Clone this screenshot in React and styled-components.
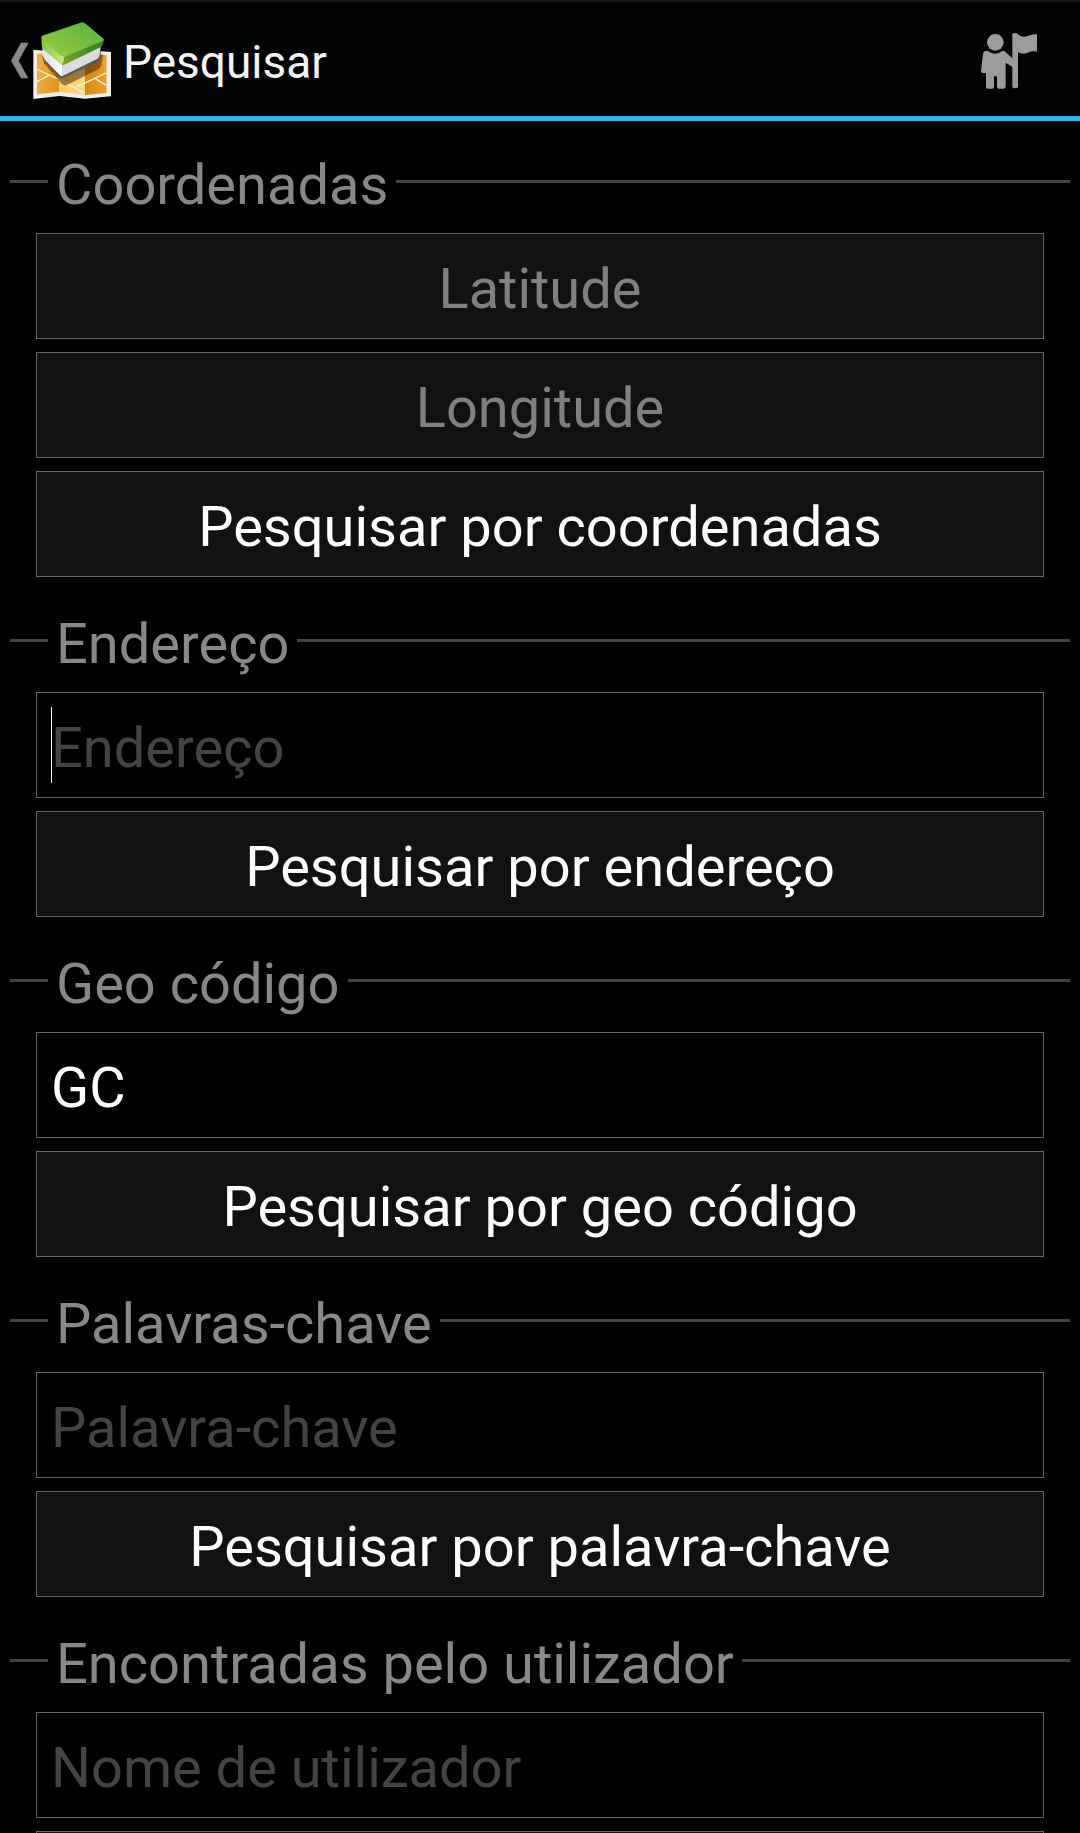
import React from "react";
import styled, { createGlobalStyle } from "styled-components";

const GlobalStyle = createGlobalStyle`
  * { box-sizing: border-box; }
  body {
    margin: 0;
    background: #000;
    color: #fff;
    font-family: Roboto, "Liberation Sans", sans-serif;
  }
`;

const Screen = styled.div`
  display: flex;
  flex-direction: column;
  height: 100vh;
  overflow: hidden;
`;

const ActionBar = styled.header`
  display: flex;
  flex: none;
  align-items: center;
  justify-content: space-between;
  padding: 18px 42px 15px 10px;
  background: #020303;
  border-top: 2px solid #1a1a1a;
  border-bottom: 5px solid #33b5e5;
`;

const IconButton = styled.button`
  display: flex;
  align-items: center;
  gap: 2px;
  padding: 0;
  border: 0;
  background: none;
`;

const Brand = styled.div`
  display: flex;
  align-items: center;
  gap: 10px;
`;

const Title = styled.h1`
  margin: 0;
  padding-top: 2px;
  color: #f3f3f3;
  font-size: 46px;
  font-weight: 400;
  line-height: 54px;
`;

const Content = styled.main`
  display: flex;
  flex: 1;
  flex-direction: column;
  gap: 27px;
  min-height: 0;
  padding: 24px 10px 0;
  overflow-y: auto;
  scrollbar-width: none;
`;

const Section = styled.section`
  display: flex;
  flex: none;
  flex-direction: column;
  gap: 15px;
`;

const Heading = styled.h2`
  display: flex;
  align-items: center;
  gap: 8px;
  margin: 0;
  color: #888;
  font-size: 56px;
  font-weight: 400;
  line-height: 66px;

  &::before,
  &::after {
    content: "";
    height: 3px;
    background: #444;
  }
  &::before { width: 38px; }
  &::after { flex: 1; }
`;

const HeadingText = styled.span`
  padding-top: 7px;
`;

const Controls = styled.div`
  display: flex;
  flex-direction: column;
  gap: 13px;
  padding: 0 26px;
`;

const Button = styled.button`
  height: 106px;
  padding: 6px 14px 0;
  border: 1px solid #666;
  border-radius: 0;
  background: #111;
  color: ${(p) => (p.$hint ? "#808080" : "#fff")};
  font: inherit;
  font-size: 56px;
  line-height: 66px;
  text-align: center;
`;

const Input = styled.input`
  width: 100%;
  height: 106px;
  padding: 6px 14px 0;
  border: 1px solid #666;
  border-radius: 0;
  outline: 0;
  background: ${(p) =>
    p.$caret ? "linear-gradient(#fff, #fff) 14px 14px / 1px 76px no-repeat #000" : "#000"};
  color: #fff;
  font: inherit;
  font-size: 56px;

  &::placeholder {
    color: #444;
    opacity: 1;
  }
`;

const Chevron = () => (
  <svg width="20" height="38" viewBox="30 126 60 114" aria-hidden="true">
    <path d="M63 128H86L56 182L85 235H63L33 182Z" fill="#8a8a8a" />
  </svg>
);

const Logo = () => (
  <svg width="81" height="81" viewBox="96 60 243 243" aria-hidden="true">
    <defs>
      <linearGradient id="mapLeft" x1="0" x2="1">
        <stop offset="0" stopColor="#f0b44c" />
        <stop offset="1" stopColor="#dd911f" />
      </linearGradient>
      <linearGradient id="mapMid" x1="0" x2="1">
        <stop offset="0" stopColor="#ffc95c" />
        <stop offset="1" stopColor="#ffd98a" />
      </linearGradient>
      <linearGradient id="mapRight" x1="0" x2="1">
        <stop offset="0" stopColor="#d8860f" />
        <stop offset="1" stopColor="#eba63a" />
      </linearGradient>
      <linearGradient id="lidTop" x1="0" y1="1" x2="1" y2="0">
        <stop offset="0" stopColor="#9ccd3c" />
        <stop offset="1" stopColor="#55b043" />
      </linearGradient>
      <linearGradient id="lidSide" x1="0" x2="1">
        <stop offset="0" stopColor="#74a82c" />
        <stop offset="1" stopColor="#2f7a2b" />
      </linearGradient>
      <linearGradient id="lidFront" x1="0" x2="1">
        <stop offset="0" stopColor="#84c43a" />
        <stop offset="1" stopColor="#c3e27a" />
      </linearGradient>
      <linearGradient id="boxFront" x1="0" x2="1">
        <stop offset="0" stopColor="#dedede" />
        <stop offset="1" stopColor="#ffffff" />
      </linearGradient>
      <clipPath id="mapArea">
        <path d="M111 160L178 166L255 160L320 165V279L255 285L178 275L111 283Z" />
      </clipPath>
    </defs>
    <path d="M100 149L178 156L255 150L333 156V289L255 296L178 288L100 297Z" fill="#f1eeea" />
    <g clipPath="url(#mapArea)">
      <path d="M100 140H178V300H100Z" fill="url(#mapLeft)" />
      <path d="M178 140H255V300H178Z" fill="url(#mapMid)" />
      <path d="M255 140H333V300H255Z" fill="url(#mapRight)" />
      <path
        d="M104 204L150 226L178 238L255 281M108 246L150 224M232 260L324 216M284 235L326 260"
        fill="none"
        stroke="#fbf0dc"
        strokeWidth="4"
      />
      <path d="M128 168L132 190L184 250Q192 259 202 254L298 206Q304 200 305 192L309 160Z" fill="#4c2c00" fillOpacity="0.56" />
    </g>
    <path d="M127 168Q128 178 133 184L178 231Q184 236 192 233L293 185Q299 181 300 174L303 154Z" fill="#55585c" />
    <path d="M127 140L188 190V229Q183 229 179 225L134 179Q129 173 128 166Z" fill="url(#boxFront)" />
    <path d="M188 188L303 134L298 168Q297 174 291 177L188 228Z" fill="#dcdddd" />
    <path d="M124 110L188 170V195Q182 194 178 190L130 147Q125 142 125 136Z" fill="url(#lidFront)" />
    <path d="M188 168L312 118L309 133Q307 139 301 142L196 193Q190 196 186 194Z" fill="url(#lidSide)" />
    <path d="M127 107L241 68Q248 65 254 69L309 115Q314 120 307 124L195 169Q188 172 182 167L127 117Q121 111 127 107Z" fill="url(#lidTop)" />
    <path d="M182 166Q188 171 194 168L190 187Q187 191 184 187Z" fill="#d3ea93" fillOpacity="0.8" />
  </svg>
);

const GuideIcon = () => (
  <svg width="58" height="58" viewBox="60 93 174 174" aria-hidden="true">
    <g fill="#9b9b9b">
      <circle cx="106" cy="124" r="25" />
      <path d="M157 99Q158 96 165 96Q172 96 173 100Q187 112 204 104Q219 98 231 100V152Q218 148 203 155Q188 162 174 153V258Q173 262 165 262Q158 262 157 258V197L137 185V257Q136 263 130 263H117Q111 263 111 257V226H102V257Q102 263 96 263H84Q78 263 78 257V216H69Q63 216 63 210L69 158Q70 151 77 150H84Q105 166 127 150H133L157 172Z" />
    </g>
  </svg>
);

const sections = [
  { id: "coords", title: "Coordenadas", pickers: ["Latitude", "Longitude"], action: "Pesquisar por coordenadas" },
  { id: "address", title: "Endereço", placeholder: "Endereço", caret: true, action: "Pesquisar por endereço" },
  { id: "geocode", title: "Geo código", value: "GC", action: "Pesquisar por geo código" },
  { id: "keyword", title: "Palavras-chave", placeholder: "Palavra-chave", action: "Pesquisar por palavra-chave" },
  { id: "finder", title: "Encontradas pelo utilizador", placeholder: "Nome de utilizador", action: "Pesquisar por utilizador" },
];

function SearchSection({ id, title, pickers, placeholder, value, caret, action }) {
  return (
    <Section>
      <Heading>
        {pickers ? (
          <HeadingText>{title}</HeadingText>
        ) : (
          <HeadingText as="label" htmlFor={id}>{title}</HeadingText>
        )}
      </Heading>
      <Controls>
        {pickers ? (
          pickers.map((name) => (
            <Button key={name} type="button" $hint>{name}</Button>
          ))
        ) : (
          <Input id={id} type="text" placeholder={placeholder} defaultValue={value} $caret={caret} />
        )}
        <Button type="button">{action}</Button>
      </Controls>
    </Section>
  );
}

export default function App() {
  return (
    <Screen>
      <GlobalStyle />
      <ActionBar>
        <Brand>
          <IconButton type="button" aria-label="Voltar">
            <Chevron />
            <Logo />
          </IconButton>
          <Title>Pesquisar</Title>
        </Brand>
        <IconButton type="button" aria-label="Guia">
          <GuideIcon />
        </IconButton>
      </ActionBar>
      <Content>
        {sections.map((s) => (
          <SearchSection key={s.id} {...s} />
        ))}
      </Content>
    </Screen>
  );
}
